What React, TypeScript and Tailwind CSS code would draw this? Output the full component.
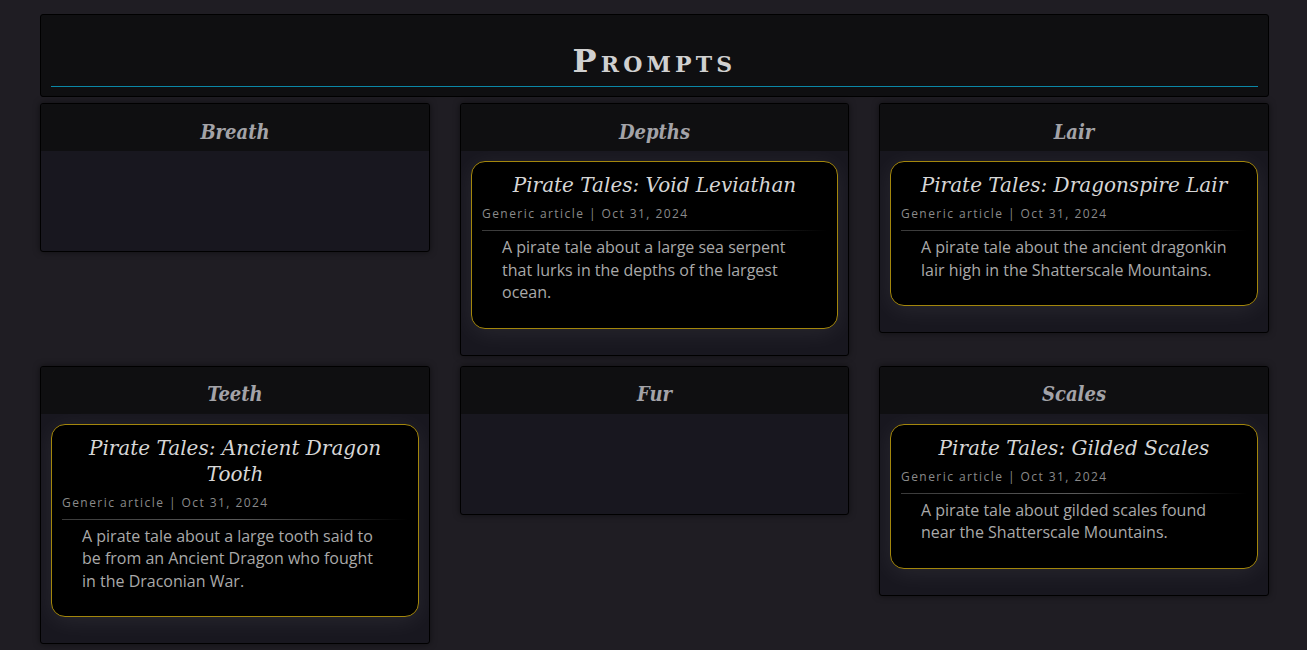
const SERIF = "font-['DejaVu_Serif',serif]";

type Article = { title: string; desc: string };

const sections: { name: string; article?: Article }[] = [
  { name: "Breath" },
  {
    name: "Depths",
    article: {
      title: "Pirate Tales: Void Leviathan",
      desc: "A pirate tale about a large sea serpent that lurks in the depths of the largest ocean.",
    },
  },
  {
    name: "Lair",
    article: {
      title: "Pirate Tales: Dragonspire Lair",
      desc: "A pirate tale about the ancient dragonkin lair high in the Shatterscale Mountains.",
    },
  },
  {
    name: "Teeth",
    article: {
      title: "Pirate Tales: Ancient Dragon Tooth",
      desc: "A pirate tale about a large tooth said to be from an Ancient Dragon who fought in the Draconian War.",
    },
  },
  { name: "Fur" },
  {
    name: "Scales",
    article: {
      title: "Pirate Tales: Gilded Scales",
      desc: "A pirate tale about gilded scales found near the Shatterscale Mountains.",
    },
  },
];

function ArticleCard({ article }: { article: Article }) {
  return (
    <div className="rounded-[14px] border border-[#a3860c] bg-black px-[10px] pt-[10px] pb-[24px] shadow-[0_4px_24px_rgba(255,255,255,0.07)]">
      <h3 className={`${SERIF} text-center text-[20px] leading-[26px] italic text-[#d6d6d6]`}>
        {article.title}
      </h3>
      <div className="mt-[8px] font-['Open_Sans',sans-serif] text-[12px] leading-[16px] tracking-[0.12em] text-[#8a8a8a]">
        Generic article | Oct 31, 2024
      </div>
      <div className="mt-[8px] h-px bg-gradient-to-r from-[#3a3a3a] via-[#5a5a5a] to-transparent" />
      <p className="mt-[5px] px-[20px] font-['Open_Sans',sans-serif] text-[16px] leading-[22.5px] text-[#a9a9a9]">
        {article.desc}
      </p>
    </div>
  );
}

function Panel({ name, article }: { name: string; article?: Article }) {
  return (
    <div className="overflow-hidden rounded-[3px] border border-black bg-[#18171f] shadow-[0_0_6px_rgba(0,0,0,0.5)]">
      <div className="flex h-[47px] items-center justify-center bg-[#0f0f11] pt-[8px]">
        <h2 className={`${SERIF} text-[20px] font-bold italic text-[#a3a3a8] [font-stretch:condensed]`}>
          {name}
        </h2>
      </div>
      <div className="min-h-[100px] px-[10px] pt-[10px] pb-[26px]">
        {article && <ArticleCard article={article} />}
      </div>
    </div>
  );
}

export default function App() {
  return (
    <div className="min-h-screen bg-[#1f1d23] pt-[14px] pb-[10px]">
      <div className="ml-[40px] w-[1229px]">
        <header className="flex h-[83px] flex-col justify-end rounded-[3px] border border-black bg-[#0f0f11] px-[10px] pb-[9px]">
          <h1
            className={`${SERIF} pb-[7px] text-center text-[32px] leading-[36px] font-bold tracking-[0.13em] text-[#d0d0d0] [font-variant:small-caps]`}
          >
            Prompts
          </h1>
          <div className="border-t border-[#0b87a6]" />
        </header>
        <div className="mt-[6px] grid grid-cols-[390px_389px_390px] items-start gap-x-[30px] gap-y-[10px]">
          {sections.map((s) => (
            <Panel key={s.name} name={s.name} article={s.article} />
          ))}
        </div>
      </div>
    </div>
  );
}
